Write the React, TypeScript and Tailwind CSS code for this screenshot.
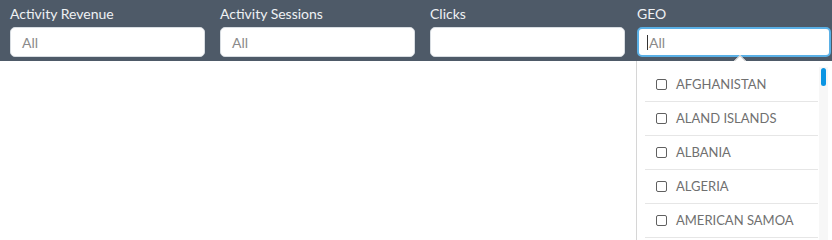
import { useState } from "react";

const fields = [
  { label: "Activity Revenue", value: "All" },
  { label: "Activity Sessions", value: "All" },
  { label: "Clicks", value: "" },
];

const countries = ["AFGHANISTAN", "ALAND ISLANDS", "ALBANIA", "ALGERIA", "AMERICAN SAMOA"];

export default function App() {
  const [picked, setPicked] = useState<string[]>([]);

  const toggle = (c: string) =>
    setPicked((p) => (p.includes(c) ? p.filter((x) => x !== c) : [...p, c]));

  return (
    <div className="h-[240px] w-[832px] overflow-hidden bg-white font-['Lato',sans-serif]">
      <div className="flex h-[61px] gap-[15px] bg-[#4e5a68] pl-[10px] pr-px pt-[5px]">
        {fields.map((f) => (
          <div key={f.label} className="flex w-[195px] flex-col">
            <span className="text-[14px] leading-[18px] text-[#eef1f4]">{f.label}</span>
            <div className="mt-[4px] flex h-[30px] items-center rounded-[5px] border border-[#d8dde2] bg-white px-[11px] text-[14px] text-[#8a8a8a]">
              {f.value}
            </div>
          </div>
        ))}
        <div className="relative ml-[-3px] flex flex-1 flex-col">
          <span className="text-[14px] leading-[18px] text-[#eef1f4]">GEO</span>
          <div className="mt-[4px] flex h-[30px] items-center rounded-[5px] border-2 border-[#5ab0e6] bg-white px-[8px] text-[14px] text-[#8a8a8a]">
            <span className="mr-[1px] h-[15px] w-px bg-[#333]" />
            All
          </div>
          <div className="absolute left-[98px] top-[52px] h-[10px] w-[10px] rotate-45 border-l border-t border-[#cfcfcf] bg-white" />
        </div>
      </div>

      <div className="flex justify-end">
        <div className="relative flex h-[179px] w-[196px] border-l border-[#d6d6d6] bg-white pr-[4px]">
          <ul className="flex-1 pl-[8px] pr-px pt-[7px]">
            {countries.map((c) => (
              <li
                key={c}
                onClick={() => toggle(c)}
                className="flex h-[34px] cursor-pointer items-center border-b border-[#e6e6e6] pl-[11px] text-[13px] text-[#707070]"
              >
                <span
                  className={`mr-[9px] h-[11px] w-[11px] rounded-[2px] border border-[#606060] ${
                    picked.includes(c) ? "bg-[#5ab0e6]" : "bg-white"
                  }`}
                />
                {c}
              </li>
            ))}
          </ul>
          <div className="mt-[6px] w-[9px] bg-[#f7f7f7] pt-[1px]">
            <div className="mx-auto h-[18px] w-[5px] rounded-full bg-[#0b95e3]" />
          </div>
        </div>
      </div>
    </div>
  );
}
